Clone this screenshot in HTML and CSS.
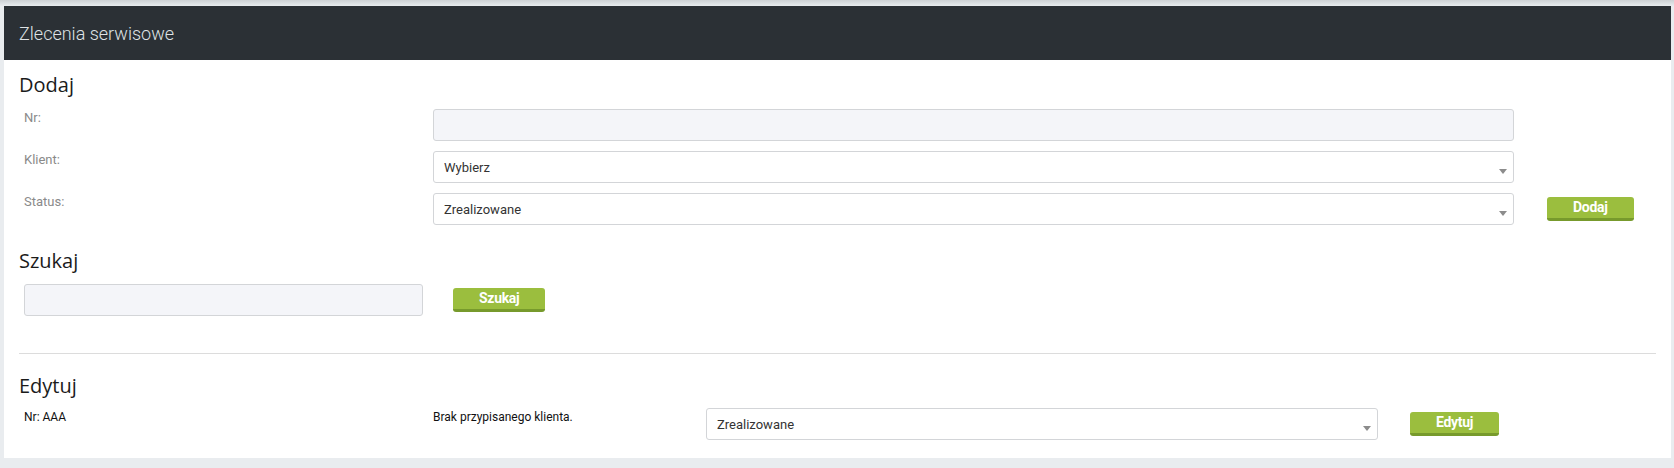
FILE: index.html
```html
<!DOCTYPE html>
<html lang="pl">
<head>
  <meta charset="UTF-8">
  <meta name="viewport" content="width=device-width, initial-scale=1.0">
  <title>Zlecenia serwisowe</title>
  <link rel="stylesheet" href="styles.css">
</head>
<body>

  <div class="card">
    <div class="card-header">Zlecenia serwisowe</div>

    <div class="card-body">

      <!-- Dodaj -->
      <h3 class="section-title">Dodaj</h3>
      <div class="form-row">
        <label class="label" for="nrAdd">Nr:</label>
        <div class="field"><input type="text" id="nrAdd" class="input input-muted"></div>
        <div></div>
      </div>
      <div class="form-row">
        <label class="label" for="clientAdd">Klient:</label>
        <div class="field">
          <span class="select-wrap">
            <select id="clientAdd" class="input select">
              <option>Wybierz</option>
            </select>
          </span>
        </div>
        <div></div>
      </div>
      <div class="form-row">
        <label class="label" for="statusAdd">Status:</label>
        <div class="field">
          <span class="select-wrap">
            <select id="statusAdd" class="input select">
              <option>Zrealizowane</option>
              <option>W realizacji</option>
              <option>Nowe</option>
            </select>
          </span>
        </div>
        <div class="btn-cell"><button class="button">Dodaj</button></div>
      </div>

      <!-- Szukaj -->
      <h3 class="section-title search-title">Szukaj</h3>
      <div class="search-row">
        <div class="field"><input type="text" id="searchInput" class="input input-muted"></div>
        <div class="btn-cell search-btn"><button class="button">Szukaj</button></div>
      </div>

      <hr class="divider">

      <!-- Edytuj -->
      <h3 class="section-title edit-title">Edytuj</h3>
      <div class="edit-row">
        <div class="text-cell">Nr: AAA</div>
        <div class="text-cell">Brak przypisanego klienta.</div>
        <div class="field">
          <span class="select-wrap">
            <select class="input select">
              <option>Zrealizowane</option>
              <option>W realizacji</option>
              <option>Nowe</option>
            </select>
          </span>
        </div>
        <div class="btn-cell"><button class="button">Edytuj</button></div>
      </div>
    </div>
  </div>

</body>
</html>
```

FILE: styles.css
```css
body {
  margin: 0;
  padding: 6px 3px 10px 4px;
  font-family: Roboto, "Liberation Sans", sans-serif;
  background: linear-gradient(#cdd1d4, #e9ecef 6px) #e9ecef;
  background-repeat: no-repeat;
}
.card {
  background-color: #fff;
}
.card-header {
  height: 53px;
  padding: 1px 15px 0;
  background-color: #2b3035;
  color: #dfe2e5;
  font-size: 18px;
  font-weight: 300;
  line-height: 54px;
}
.card-body {
  padding: 13px 15px 18px;
}
.section-title {
  margin: 0 0 12px;
  font-family: "Open Sans", "Noto Sans", sans-serif;
  font-size: 20px;
  font-weight: 400;
  line-height: 24px;
  color: #1b1b1b;
}
.search-title { margin-top: 24px; margin-bottom: 11px; }
.edit-title { margin-top: 20px; margin-bottom: 10px; }

.form-row {
  display: grid;
  grid-template-columns: 409px 1091px 1fr;
  margin-bottom: 10px;
}
.form-row:last-of-type { margin-bottom: 0; }
.label {
  padding-left: 5px;
  font-size: 13px;
  line-height: 18px;
  color: #8a8a8a;
}
.field {
  padding: 0 5px;
}
.input {
  display: block;
  box-sizing: border-box;
  width: 100%;
  height: 32px;
  padding: 0 10px;
  border: 1px solid #d3d5d8;
  border-radius: 3px;
  background-color: #fff;
  font-family: Roboto, "Liberation Sans", sans-serif;
  font-size: 13px;
  color: #333;
  outline: none;
}
.input-muted { background-color: #f4f5f9; }
.select {
  appearance: none;
  -webkit-appearance: none;
}
.select-wrap {
  position: relative;
  display: block;
}
.select-wrap::after {
  content: "";
  position: absolute;
  right: 7px;
  bottom: 9px;
  border-left: 4px solid transparent;
  border-right: 4px solid transparent;
  border-top: 5px solid #8c8c8c;
  pointer-events: none;
}
.btn-cell {
  display: flex;
  align-items: center;
  padding-left: 28px;
}
.button {
  height: 24px;
  padding: 0 26px;
  border: none;
  border-bottom: 3px solid #779a2c;
  border-radius: 3px;
  background-color: #9bbe3e;
  color: #fff;
  font-family: Roboto, "Liberation Sans", sans-serif;
  font-size: 14px;
  font-weight: 700;
  letter-spacing: -0.3px;
  line-height: 21px;
  cursor: pointer;
}
.button:hover { background-color: #8aad33; }

.search-row {
  display: grid;
  grid-template-columns: 409px 1fr;
}
.search-btn { padding-left: 25px; }

.divider {
  margin: 37px 0 0;
  border: none;
  border-top: 1px solid #dcdcdc;
}

.edit-row {
  display: grid;
  grid-template-columns: 409px 273px 682px 1fr;
}
.text-cell {
  padding-left: 5px;
  font-size: 12px;
  line-height: 18px;
  color: #111;
}
.edit-row .btn-cell { padding-left: 27px; }
```
